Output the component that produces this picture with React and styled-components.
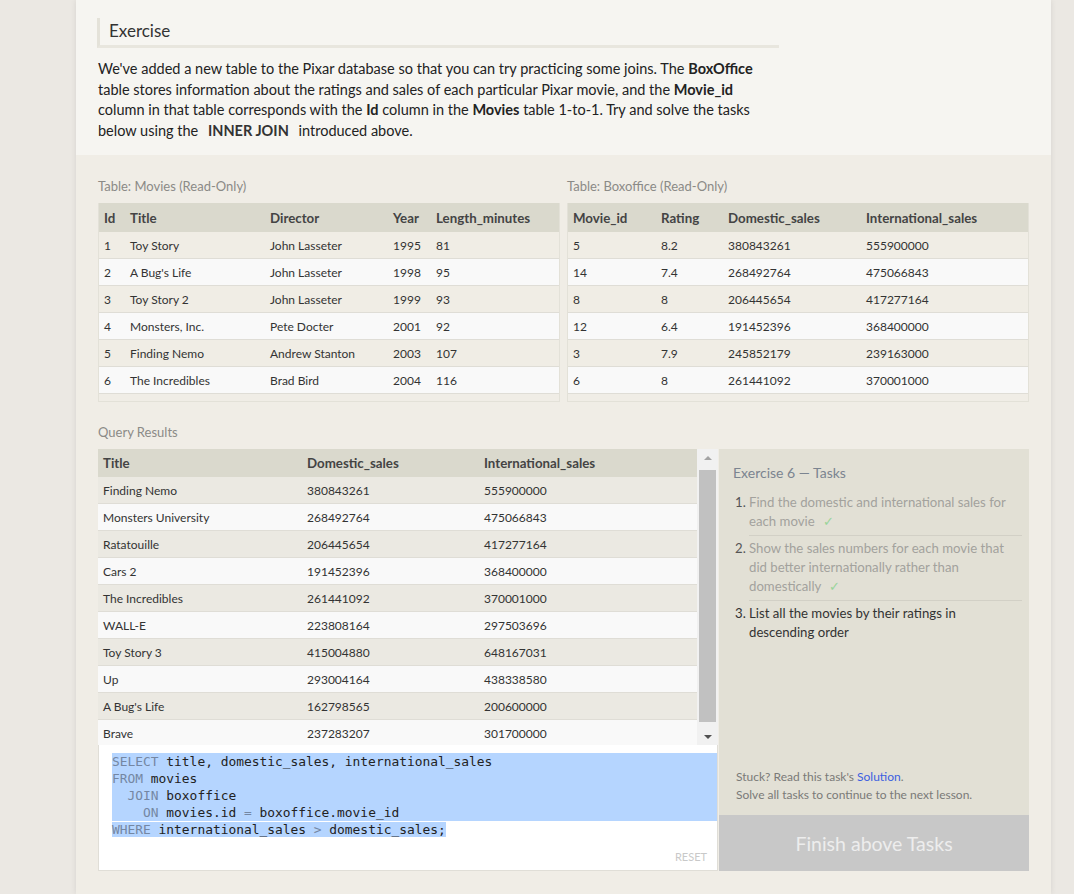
import React from 'react'
import styled, { createGlobalStyle } from 'styled-components'

const GlobalStyle = createGlobalStyle`
    html, body {
        margin: 0;
        padding: 0;
        background: #ebe8e3;
    }
    body {
        font-family: Lato, "Open Sans", sans-serif;
        color: #333;
    }
`

const MOVIES = [
    [1, 'Toy Story', 'John Lasseter', 1995, 81],
    [2, "A Bug's Life", 'John Lasseter', 1998, 95],
    [3, 'Toy Story 2', 'John Lasseter', 1999, 93],
    [4, 'Monsters, Inc.', 'Pete Docter', 2001, 92],
    [5, 'Finding Nemo', 'Andrew Stanton', 2003, 107],
    [6, 'The Incredibles', 'Brad Bird', 2004, 116],
]

const BOXOFFICE = [
    [5, 8.2, 380843261, 555900000],
    [14, 7.4, 268492764, 475066843],
    [8, 8, 206445654, 417277164],
    [12, 6.4, 191452396, 368400000],
    [3, 7.9, 245852179, 239163000],
    [6, 8, 261441092, 370001000],
]

const RESULTS = [
    ['Finding Nemo', 380843261, 555900000],
    ['Monsters University', 268492764, 475066843],
    ['Ratatouille', 206445654, 417277164],
    ['Cars 2', 191452396, 368400000],
    ['The Incredibles', 261441092, 370001000],
    ['WALL-E', 223808164, 297503696],
    ['Toy Story 3', 415004880, 648167031],
    ['Up', 293004164, 438338580],
    ["A Bug's Life", 162798565, 200600000],
    ['Brave', 237283207, 301700000],
]

const TASKS = [
    { text: 'Find the domestic and international sales for each movie', done: true },
    { text: 'Show the sales numbers for each movie that did better internationally rather than domestically', done: true },
    { text: 'List all the movies by their ratings in descending order', done: false },
]

const Sheet = styled.main`
    width: 975px;
    margin-left: 76px;
    min-height: 894px;
    background: #f0ede6;
    box-shadow: 0 0 6px rgba(0, 0, 0, 0.09);
`

const Intro = styled.section`
    background: #f6f5f1;
    padding: 18px 22px 14px;
`

const Heading = styled.h2`
    box-sizing: border-box;
    width: 682px;
    margin: 0 0 11px -1px;
    padding: 2px 0 3px 9px;
    border-left: 3px solid #e4e2d9;
    border-bottom: 3px solid #e8e6de;
    font-size: 17px;
    font-weight: 400;
    line-height: 22px;
    color: #333;
`

const Lead = styled.p`
    width: 682px;
    margin: 0;
    font-size: 14.5px;
    line-height: 20.5px;
    color: #222;
    b {
        font-weight: 700;
    }
`

const Keyword = styled.b`
    padding: 0 6px;
    color: #333;
`

const Work = styled.section`
    padding: 23px 22px 23px;
`

const TablesRow = styled.div`
    display: grid;
    grid-template-columns: 1fr 1fr;
    gap: 7px;
`

const Caption = styled.div`
    margin-bottom: 9px;
    font-size: 13px;
    line-height: 16px;
    color: #8b8a86;
`

const TableFrame = styled.div`
    border: 1px solid #e3e1d8;
    border-top: none;
    padding-bottom: 7px;
`

const Grid = styled.table`
    width: 100%;
    border-collapse: collapse;
    table-layout: fixed;
    font-size: 12px;
    tbody tr:nth-child(odd) {
        background: ${({ $odd }) => $odd};
    }
    tbody tr:nth-child(even) {
        background: #f9f9f9;
    }
`

const Col = styled.col`
    width: ${({ $w }) => ($w ? `${$w}px` : 'auto')};
`

const HeadCell = styled.th`
    height: ${({ $h }) => $h}px;
    padding: 0 5px;
    text-align: left;
    font-size: 13.3px;
    font-weight: 700;
    color: #444;
    background: #dad9cd;
    white-space: nowrap;
    overflow: hidden;
`

const Row = styled.tr`
    border-bottom: 1px solid #dfddd6;
`

const Cell = styled.td`
    height: 26px;
    padding: 0 5px;
    color: #333;
    white-space: nowrap;
    overflow: hidden;
`

const ResultsCaption = styled(Caption)`
    margin-top: 22px;
`

const Workbench = styled.div`
    display: grid;
    grid-template-columns: 620px 1fr;
    gap: 1px;
`

const LeftColumn = styled.div`
    display: flex;
    flex-direction: column;
`

const Results = styled.div`
    display: flex;
    height: 296px;
`

const ResultsViewport = styled.div`
    flex: 1;
    overflow: hidden;
`

const Scrollbar = styled.div`
    width: 21px;
    display: flex;
    flex-direction: column;
    align-items: center;
    background: #f1f1f1;
`

const ScrollArrow = styled.div`
    height: 17px;
    width: 100%;
    display: flex;
    align-items: center;
    justify-content: center;
    &::after {
        content: '';
        border-left: 4px solid transparent;
        border-right: 4px solid transparent;
        ${({ $down }) =>
            $down
                ? 'border-top: 4px solid #505050;'
                : 'border-bottom: 4px solid #a3a3a3;'}
    }
`

const Thumb = styled.div`
    width: 17px;
    flex: 1;
    margin: 4px 0 6px;
    background: #c1c1c1;
`

const Editor = styled.div`
    box-sizing: border-box;
    height: 126px;
    display: flex;
    flex-direction: column;
    padding: 8px 0 7px 13px;
    background: #fff;
    border: 1px solid #e0ded7;
    border-top: none;
`

const Code = styled.pre`
    margin: 0;
    font-family: "DejaVu Sans Mono", "Liberation Mono", monospace;
    font-size: 12.9px;
    line-height: 17px;
    color: #222;
`

const CodeLine = styled.div`
    background: ${({ $full }) => ($full ? '#b5d5ff' : 'transparent')};
`

const Selected = styled.span`
    background: #b5d5ff;
`

const Kw = styled.span`
    color: #7487a3;
`

const ResetButton = styled.button`
    align-self: flex-end;
    margin-top: auto;
    margin-right: 10px;
    padding: 0;
    border: none;
    background: none;
    font-family: Lato, sans-serif;
    font-size: 11px;
    color: #c9c9c9;
    cursor: pointer;
`

const RightColumn = styled.div`
    display: flex;
    flex-direction: column;
`

const Tasks = styled.aside`
    flex: 1;
    display: flex;
    flex-direction: column;
    padding: 14px 7px 11px 14px;
    background: #e2e0d5;
`

const TasksTitle = styled.h3`
    margin: 0 0 8px;
    font-size: 14px;
    font-weight: 400;
    line-height: 19px;
    color: #7b8490;
`

const TaskList = styled.ol`
    margin: 0;
    padding: 0;
    list-style: none;
`

const TaskItem = styled.li`
    display: flex;
    font-size: 13.2px;
    line-height: 19px;
`

const TaskNum = styled.span`
    width: 14px;
    padding: 3px 0 0 2px;
    flex-shrink: 0;
    color: ${({ $done }) => ($done ? '#555' : '#333')};
`

const TaskText = styled.div`
    flex: 1;
    padding: 3px 4px 4px 0;
    border-bottom: ${({ $last }) => ($last ? 'none' : '1px solid #d2d0c6')};
    color: ${({ $done }) => ($done ? '#a3a29d' : '#333')};
`

const Check = styled.span`
    margin-left: 8px;
    color: #99d49a;
`

const Help = styled.div`
    margin-top: auto;
    padding-left: 3px;
    font-size: 12px;
    line-height: 18px;
    color: #7a7a78;
    a {
        color: #3c5fe0;
        text-decoration: none;
    }
`

const FinishButton = styled.button`
    height: 56px;
    border: none;
    background: #c8c8c8;
    font-family: Lato, sans-serif;
    font-size: 19.5px;
    color: #ededed;
`

const DataTable = ({ columns, widths, rows, odd = '#f0ede5', headHeight = 28 }) => (
    <Grid $odd={odd}>
        <colgroup>
            {widths.map((w, i) => (
                <Col key={i} $w={w} />
            ))}
        </colgroup>
        <thead>
            <tr>
                {columns.map((c) => (
                    <HeadCell key={c} $h={headHeight}>
                        {c}
                    </HeadCell>
                ))}
            </tr>
        </thead>
        <tbody>
            {rows.map((r, i) => (
                <Row key={i}>
                    {r.map((v, j) => (
                        <Cell key={j}>{v}</Cell>
                    ))}
                </Row>
            ))}
        </tbody>
    </Grid>
)

export default function App() {
    return (
        <>
            <GlobalStyle />
            <Sheet>
                <Intro>
                    <Heading>Exercise</Heading>
                    <Lead>
                        We've added a new table to the Pixar database so that you can try practicing
                        some joins. The <b>BoxOffice</b> table stores information about the ratings and
                        sales of each particular Pixar movie, and the <b>Movie_id</b> column in that
                        table corresponds with the <b>Id</b> column in the <b>Movies</b> table 1-to-1.
                        Try and solve the tasks below using the <Keyword>INNER JOIN</Keyword> introduced
                        above.
                    </Lead>
                </Intro>

                <Work>
                    <TablesRow>
                        <div>
                            <Caption>Table: Movies (Read-Only)</Caption>
                            <TableFrame>
                                <DataTable
                                    columns={['Id', 'Title', 'Director', 'Year', 'Length_minutes']}
                                    widths={[26, 140, 123, 43, null]}
                                    rows={MOVIES}
                                    headHeight={29}
                                />
                            </TableFrame>
                        </div>
                        <div>
                            <Caption>Table: Boxoffice (Read-Only)</Caption>
                            <TableFrame>
                                <DataTable
                                    columns={['Movie_id', 'Rating', 'Domestic_sales', 'International_sales']}
                                    widths={[88, 67, 138, null]}
                                    rows={BOXOFFICE}
                                    headHeight={29}
                                />
                            </TableFrame>
                        </div>
                    </TablesRow>

                    <ResultsCaption>Query Results</ResultsCaption>
                    <Workbench>
                        <LeftColumn>
                            <Results>
                                <ResultsViewport>
                                    <DataTable
                                        columns={['Title', 'Domestic_sales', 'International_sales']}
                                        widths={[204, 177, null]}
                                        rows={RESULTS}
                                        odd="#ebe9e2"
                                    />
                                </ResultsViewport>
                                <Scrollbar>
                                    <ScrollArrow />
                                    <Thumb />
                                    <ScrollArrow $down />
                                </Scrollbar>
                            </Results>
                            <Editor>
                                <Code>
                                    <CodeLine $full>
                                        <Kw>SELECT</Kw> title, domestic_sales, international_sales
                                    </CodeLine>
                                    <CodeLine $full>
                                        <Kw>FROM</Kw> movies
                                    </CodeLine>
                                    <CodeLine $full>
                                        {'  '}
                                        <Kw>JOIN</Kw> boxoffice
                                    </CodeLine>
                                    <CodeLine $full>
                                        {'    '}
                                        <Kw>ON</Kw> movies.id <Kw>=</Kw> boxoffice.movie_id
                                    </CodeLine>
                                    <CodeLine>
                                        <Selected>
                                            <Kw>WHERE</Kw> international_sales <Kw>&gt;</Kw> domestic_sales;
                                        </Selected>
                                    </CodeLine>
                                </Code>
                                <ResetButton>RESET</ResetButton>
                            </Editor>
                        </LeftColumn>

                        <RightColumn>
                            <Tasks>
                                <TasksTitle>Exercise 6 — Tasks</TasksTitle>
                                <TaskList>
                                    {TASKS.map((t, i) => (
                                        <TaskItem key={i}>
                                            <TaskNum $done={t.done}>{i + 1}.</TaskNum>
                                            <TaskText $done={t.done} $last={i === TASKS.length - 1}>
                                                {t.text}
                                                {t.done && <Check>✓</Check>}
                                            </TaskText>
                                        </TaskItem>
                                    ))}
                                </TaskList>
                                <Help>
                                    Stuck? Read this task's <a href="#solution">Solution</a>.
                                    <br />
                                    Solve all tasks to continue to the next lesson.
                                </Help>
                            </Tasks>
                            <FinishButton>Finish above Tasks</FinishButton>
                        </RightColumn>
                    </Workbench>
                </Work>
            </Sheet>
        </>
    )
}
